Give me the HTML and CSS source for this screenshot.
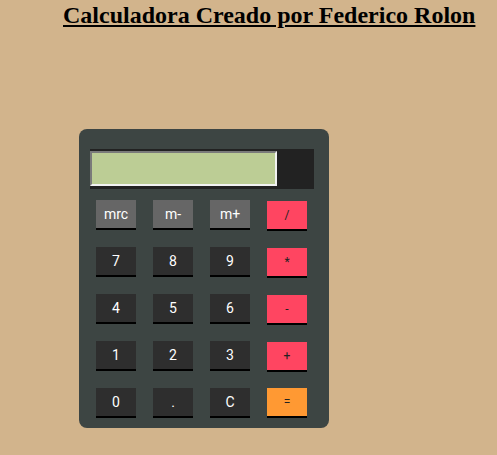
FILE: index.html
```html
<!DOCTYPE html>
<html>
<head>
<meta charset="utf-8">
<link rel="stylesheet" href="styles.css">
</head>
<body>
<h1 class="title">Calculadora Creado por Federico Rolon</h1>
<div class="calc">
  <div class="display">
    <input class="screen" type="text">
  </div>
  <div class="keys">
    <button class="key mem">mrc</button>
    <button class="key mem">m-</button>
    <button class="key mem">m+</button>
    <button class="key op">/</button>
    <button class="key">7</button>
    <button class="key">8</button>
    <button class="key">9</button>
    <button class="key op">*</button>
    <button class="key">4</button>
    <button class="key">5</button>
    <button class="key">6</button>
    <button class="key op">-</button>
    <button class="key">1</button>
    <button class="key">2</button>
    <button class="key">3</button>
    <button class="key op">+</button>
    <button class="key">0</button>
    <button class="key">.</button>
    <button class="key">C</button>
    <button class="key op eq">=</button>
  </div>
</div>
</body>
</html>
```
FILE: styles.css
```css
html, body {
  margin: 0;
  padding: 0;
  background: #d2b48c;
}
body {
  width: 497px;
  height: 455px;
  overflow: hidden;
}
.title {
  margin: 1px 0 0 0;
  padding-left: 63px;
  font-family: "Liberation Serif", serif;
  font-size: 24px;
  font-weight: bold;
  text-decoration: underline;
  color: #000;
  line-height: 28px;
}
.calc {
  margin: 100px 0 0 79px;
  width: 250px;
  box-sizing: border-box;
  padding: 20px 22px 10px 17px;
  background: #3d4543;
  border-radius: 8px;
}
.display {
  margin-left: -6px;
  width: 224px;
  height: 40px;
  background: #222;
  padding-top: 2px;
  box-sizing: border-box;
}
.screen {
  display: block;
  width: 187px;
  height: 35px;
  box-sizing: border-box;
  margin: 0;
  padding: 0;
  background: #bccd95;
  border: 2px solid;
  border-color: #7a7a7a #f2f2f2 #f2f2f2 #7a7a7a;
  outline: none;
}
.keys {
  margin-top: 11px;
  display: grid;
  grid-template-columns: repeat(4, 40px);
  grid-auto-rows: 30px;
  column-gap: 17px;
  row-gap: 17px;
}
.key {
  width: 40px;
  height: 30px;
  margin: 0;
  padding: 0;
  box-sizing: border-box;
  border: none;
  border-bottom: 2px solid #000;
  background: #2e2e2e;
  color: #fff;
  font-family: Roboto, "Liberation Sans", sans-serif;
  font-size: 14px;
}
.mem {
  background: #666;
  font-size: 14px;
}
.op {
  background: #ff4561;
  color: #222;
  font-size: 12px;
  margin-top: 1px;
}
.eq {
  background: #ff9933;
  margin-top: 0;
}
```
